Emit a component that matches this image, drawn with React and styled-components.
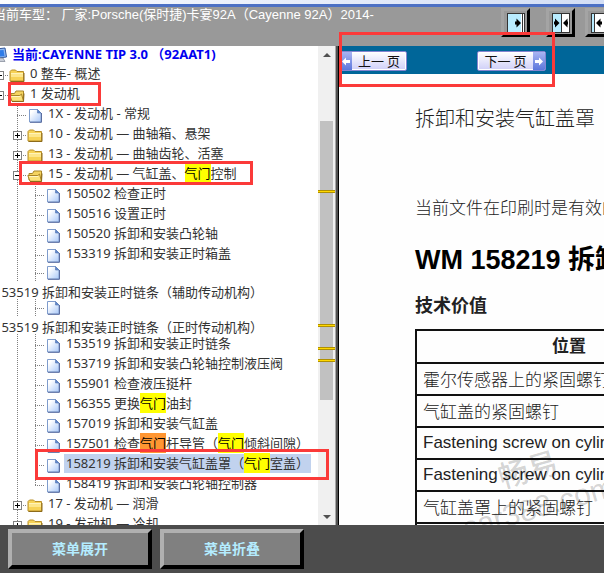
import React from "react";
import styled, { createGlobalStyle, css } from "styled-components";

const GlobalStyle = createGlobalStyle`
  * { box-sizing: border-box; }
  html, body { margin: 0; padding: 0; }
  body {
    font-family: "Noto Sans", "Noto Sans CJK SC", sans-serif;
    font-size: 13px;
    color: #333;
    overflow: hidden;
  }
  ul { list-style: none; margin: 0; padding: 0; }
  a { color: inherit; text-decoration: none; }
  button { font: inherit; padding: 0; cursor: pointer; }
`;

const Page = styled.div`
  display: flex;
  flex-direction: column;
  height: 100vh;
  overflow: hidden;
  background: #fff;
`;

/* ---------- header ---------- */

const WindowEdge = styled.div`
  flex: none;
  height: 7px;
  background: linear-gradient(90deg, #fbfcff, #d3def5);
  border-bottom: 3px solid #4c70c4;
`;

const Header = styled.header`
  flex: none;
  display: flex;
  justify-content: space-between;
  height: 39px;
  background: #999;
`;

const VehicleName = styled.h1`
  flex: none;
  margin: 0 0 0 -7px;
  font: 400 13px/15px "Liberation Sans", "Noto Sans CJK SC", sans-serif;
  color: #fff;
  white-space: pre;
`;

const LayoutTools = styled.div`
  flex: 0 0 103px;
  display: flex;
  align-items: flex-start;
  gap: 16px;
  padding-top: 1px;
  overflow: hidden;
`;

const ToolGroup = styled.div`
  display: flex;
  gap: 10px;
`;

const ToolButton = styled.button`
  flex: none;
  display: grid;
  place-items: center;
  width: 29px;
  height: 29px;
  background: #999;
  border: 3px solid;
  border-color: #a4a4a4 #000 #000 #a4a4a4;
`;

function LayoutIcon({ kind }) {
  return (
    <svg width="18" height="20" viewBox="0 0 18 20" shapeRendering="crispEdges">
      <rect x="0" y="0" width="18" height="20" fill="#333" />
      <rect x="1" y="1" width="16" height="18" fill="#fff" />
      {kind === "right" && <path d="M1 1h13v18H1z" fill="#b9ecff" />}
      {kind === "both" && <path d="M1 1h8v18H1z" fill="#b9ecff" />}
      {kind === "left" && <path d="M1 1h3v18H1z" fill="#b9ecff" />}
      {kind === "right" && <path d="M15 1h1v18h-1z" fill="#333" />}
      {kind === "both" && <path d="M9 1h1v18H9z" fill="#333" />}
      {kind === "left" && <path d="M3 1h1v18H3z" fill="#333" />}
      <g fill="#000" shapeRendering="auto">
        {kind === "right" && <path d="M8 8.500h1.500V5.500L14 10l-4.500 4.500v-3H8z" />}
        {kind === "both" && (
          <path d="M2 8.500h1V5.500L7.500 10 3 14.500v-3H2zM16 8.500h-.5V5.500L11 10l4.500 4.500v-3h.5z" />
        )}
        {kind === "left" && <path d="M11 8.500H9.500V5.500L5 10l4.500 4.500v-3H11z" />}
      </g>
    </svg>
  );
}

/* ---------- main split ---------- */

const Main = styled.main`
  flex: 1;
  min-height: 0;
  display: grid;
  grid-template-columns: 335px 4px minmax(0, 1fr);
`;

const Splitter = styled.div`
  background: linear-gradient(90deg, #a8a8a8 0 1px, #505050 1px 3px, #000 3px);
`;

const TreePane = styled.nav`
  display: grid;
  grid-template-columns: minmax(0, 1fr) 17px;
  min-height: 0;
`;

const TreeView = styled.div`
  min-height: 0;
  overflow-x: visible;
  overflow-y: clip;
`;

const Tree = styled.ul`
  margin-left: -10px;
`;

const Row = styled.li`
  position: relative;
  display: flex;
  width: max-content;
  height: ${(p) => (p.$short ? 18 : 20)}px;
  line-height: 18px;
  white-space: pre;
`;

const RootRow = styled(Row)`
  line-height: 16px;
  font-weight: 700;
  color: #0000f0;
`;

const WrappedRow = styled.li`
  height: 17px;
  padding-left: 4px;
  line-height: 20px;
  white-space: pre;
`;

const dotsDown = "repeating-linear-gradient(180deg, #808080 0 1px, transparent 1px 2px)";
const dotsAcross = "repeating-linear-gradient(90deg, #808080 0 1px, transparent 1px 2px)";

const Guide = styled.span`
  flex: none;
  display: flex;
  align-items: center;
  justify-content: center;
  width: 18px;
  padding: ${(p) => (p.$short ? 0 : 2)}px 0 0 1px;
  ${(p) =>
    p.$branch
      ? css`
          background:
            ${dotsDown} 9px 0 / 1px ${p.$last ? "11px" : "100%"} no-repeat,
            ${dotsAcross} 9px ${p.$short ? 9 : 11}px / 9px 1px no-repeat;
        `
      : p.$through &&
        css`
          background: ${dotsDown} 9px 0 / 1px 100% no-repeat;
        `}
`;

const IconCell = styled.span`
  flex: none;
  display: flex;
  align-items: center;
  justify-content: center;
  width: 18px;
  padding-top: ${(p) => (p.$short ? 0 : 3)}px;
`;

const Toggle = styled.button`
  display: block;
  width: 9px;
  height: 9px;
  border: 1px solid #808080;
  background:
    linear-gradient(#000, #000) center / 5px 1px no-repeat,
    ${(p) => !p.$open && "linear-gradient(#000, #000) center / 1px 5px no-repeat,"}
    #fff;
`;

const Label = styled.a`
  margin-left: 2px;
  padding: 0 2px;
  height: 19px;
  background: ${(p) => (p.$selected ? "#c1d2ee" : "transparent")};
`;

const Mark = styled.mark`
  padding: 1px 0;
  color: #000;
  background: ${(p) => (p.$current ? "#ff9632" : "#ff0")};
`;

const Callout = styled.span`
  position: absolute;
  z-index: 2;
  top: ${(p) => p.$top}px;
  bottom: ${(p) => p.$bottom}px;
  left: ${(p) => p.$left}px;
  right: ${(p) => p.$right}px;
  border: 3px solid #fb3a39;
  pointer-events: none;
`;

const FolderIcon = () => (
  <svg width="16" height="15" viewBox="0 0 16 15">
    <path d="M1 13V3.500L2.500 2h4L8 3.500h6.500V13z" fill="#f7d256" stroke="#b8902c" />
    <path d="M2 5.500h12" stroke="#fff3b8" />
    <path d="M1.500 13.500h13.500V5" fill="none" stroke="#8d6b1b" />
    <path d="M2 6h12v3H2z" fill="#fde68c" />
  </svg>
);

const OpenFolderIcon = () => (
  <svg width="17" height="15" viewBox="0 0 17 15">
    <path d="M2 12V5.500h3.500L7 3h7.500v9z" fill="#f5d460" stroke="#a98526" />
    <path d="M.8 7.500h10L12.500 6l2 7.300H3z" fill="#fbe27a" stroke="#a98526" />
    <path d="M2.300 8.500h9" stroke="#fff6c4" />
    <path d="M3 13.500h11.500l.5-8" fill="none" stroke="#8d6b1b" />
  </svg>
);

const DocIcon = () => (
  <svg width="13" height="14" viewBox="0 0 13 14">
    <defs>
      <linearGradient id="paper" x1="0" y1="0" x2="1" y2="1">
        <stop offset="0.200" stopColor="#fff" />
        <stop offset="1" stopColor="#a9c8f8" />
      </linearGradient>
    </defs>
    <path d="M.5.5h8L12 4v9H.5z" fill="url(#paper)" stroke="#7f9ccc" />
    <path d="M8.500.5V4H12z" fill="#5f86cb" stroke="#5f7fb8" strokeWidth=".7" />
    <path d="M1 13.300h11.500V4" fill="none" stroke="#5a6da0" />
  </svg>
);

const ComputerIcon = () => (
  <svg width="16" height="16" viewBox="0 0 16 16">
    <path d="M1 2.500L14 1l1.500 9L3 11.500z" fill="#8fb8f2" stroke="#33589c" />
    <path d="M3 4l9.500-1 1 6-9 1z" fill="#2f7ce8" />
    <path d="M7 11h5l2 3.500H5z" fill="#c9ced8" stroke="#7c8494" strokeWidth=".7" />
  </svg>
);

function Highlighted({ parts }) {
  return parts.map((part, i) =>
    typeof part === "string" ? part : (
      <Mark key={i} $current={part.current}>{part.hit}</Mark>
    )
  );
}

const HIT = { hit: "气门" };

const ITEMS = [
  { level: 0, kind: "folder", text: ["0 整车- 概述"] },
  { level: 0, kind: "open", text: ["1 发动机"], callout: [-2, -2, 18, -19] },
  { level: 1, kind: "doc", text: ["1X - 发动机 - 常规"] },
  { level: 1, kind: "folder", text: ["10 - 发动机 — 曲轴箱、悬架"] },
  { level: 1, kind: "folder", text: ["13 - 发动机 — 曲轴齿轮、活塞"] },
  { level: 1, kind: "open", text: ["15 - 发动机 — 气缸盖、", HIT, "控制"], callout: [-3, -1, 29, -14] },
  { level: 2, kind: "doc", text: ["150502 检查正时"] },
  { level: 2, kind: "doc", text: ["150516 设置正时"] },
  { level: 2, kind: "doc", text: ["150520 拆卸和安装凸轮轴"] },
  { level: 2, kind: "doc", text: ["153319 拆卸和安装正时箱盖"] },
  { level: 2, kind: "doc", wrapped: "153519 拆卸和安装正时链条（辅助传动机构）" },
  { level: 2, kind: "doc", wrapped: "153519 拆卸和安装正时链条（正时传动机构）" },
  { level: 2, kind: "doc", text: ["153519 拆卸和安装正时链条"] },
  { level: 2, kind: "doc", text: ["153719 拆卸和安装凸轮轴控制液压阀"] },
  { level: 2, kind: "doc", text: ["155901 检查液压挺杆"] },
  { level: 2, kind: "doc", text: ["156355 更换", HIT, "油封"] },
  { level: 2, kind: "doc", text: ["157019 拆卸和安装气缸盖"] },
  { level: 2, kind: "doc", text: ["157501 检查", { hit: "气门", current: true }, "杆导管（", HIT, "倾斜间隙）"] },
  { level: 2, kind: "doc", text: ["158219 拆卸和安装气缸盖罩（", HIT, "室盖）"], selected: true, callout: [-5, -6, 45, -18] },
  { level: 2, kind: "doc", text: ["158419 拆卸和安装凸轮轴控制器"], last: true },
  { level: 1, kind: "folder", text: ["17 - 发动机 — 润滑"] },
  { level: 1, kind: "folder", text: ["19 - 发动机 — 冷却"] },
];

const ICONS = { folder: FolderIcon, open: OpenFolderIcon, doc: DocIcon };

function TreeItem({ item }) {
  const short = Boolean(item.wrapped);
  const Icon = ICONS[item.kind];
  const ancestors = Array.from({ length: item.level }, (_, i) => i);
  return (
    <>
      <Row $short={short}>
        {ancestors.map((i) => <Guide key={i} $through={i > 0} />)}
        <Guide $branch $short={short} $last={item.last}>
          {item.kind !== "doc" && (
            <Toggle type="button" aria-label={item.kind === "open" ? "折叠" : "展开"} $open={item.kind === "open"} />
          )}
        </Guide>
        <IconCell $short={short}><Icon /></IconCell>
        {item.text && (
          <Label href="#" $selected={item.selected}><Highlighted parts={item.text} /></Label>
        )}
        {item.callout && (
          <Callout $top={item.callout[0]} $bottom={item.callout[1]} $left={item.callout[2]} $right={item.callout[3]} />
        )}
      </Row>
      {item.wrapped && <WrappedRow><a href="#">{item.wrapped}</a></WrappedRow>}
    </>
  );
}

/* ---------- scrollbar ---------- */

const ScrollBar = styled.div`
  display: flex;
  flex-direction: column;
  background: #f0f0f0;
`;

const ScrollArrow = styled.button`
  flex: none;
  display: grid;
  place-items: center;
  height: 17px;
  border: 0;
  background: none;
`;

const ScrollTrack = styled.div`
  position: relative;
  flex: 1;
  padding: 58px 2px 108px;
`;

const ScrollThumb = styled.div`
  height: 100%;
  background: #c1c1c1;
`;

const HitTick = styled.span`
  position: absolute;
  left: 0;
  right: 0;
  top: ${(p) => p.$at}px;
  height: 3px;
  background: #ffd800;
  border: solid #b09000;
  border-width: 1px 0;
`;

/* ---------- document ---------- */

const DocPane = styled.section`
  position: relative;
  display: flex;
  flex-direction: column;
  min-height: 0;
`;

const PagerBar = styled.div`
  flex: none;
  display: flex;
  align-items: flex-start;
  gap: 70px;
  height: 28px;
  padding-top: 5px;
  background: #069;
`;

const PagerFrame = styled.span`
  position: absolute;
  z-index: 3;
  top: -14px;
  left: 0;
  width: 216px;
  height: 55px;
  border: 3px solid #fb3a39;
  pointer-events: none;
`;

const PagerButton = styled.button`
  display: flex;
  flex-direction: ${(p) => (p.$next ? "row-reverse" : "row")};
  align-items: stretch;
  width: ${(p) => (p.$next ? 69 : 68)}px;
  height: 20px;
  border: 1px solid #8585d0;
  border-radius: 2px;
  background: linear-gradient(#fff, #cfcff8);
  box-shadow: inset 0 0 0 1px #fff;
  overflow: hidden;
  color: #111;
  font: 400 13px/17px "Noto Sans CJK SC", sans-serif;
  white-space: pre;
`;

const PagerArrow = styled.span`
  flex: none;
  display: grid;
  place-items: center;
  width: 12px;
  background: linear-gradient(#a9b4f2, #5c77dc);
`;

const PagerText = styled.span`
  flex: 1;
  text-align: center;
`;

const Article = styled.article`
  flex: 1;
  min-height: 0;
  padding: 31px 0 0 76px;
  overflow: hidden;
  background: #fefefe;
  color: #222;
  font-family: "Liberation Sans", "Noto Sans CJK SC", sans-serif;
  white-space: nowrap;
`;

const DocTitle = styled.h2`
  margin: 0;
  font: 300 20px/26px "Noto Sans CJK SC", sans-serif;
`;

const PrintNote = styled.p`
  margin: 64px 0 0;
  font: 300 17px/24px "Noto Sans CJK SC", sans-serif;
`;

const ProcedureTitle = styled.h3`
  margin: 24px 0 0;
  font-size: 27px;
  line-height: 34px;
  font-weight: 700;
  color: #000;
`;

const SectionTitle = styled.h4`
  margin: 17px 0 0;
  font-size: 18px;
  line-height: 24px;
  font-weight: 700;
`;

const ValuesTable = styled.table`
  width: 308px;
  margin-top: 11px;
  border: 2px solid #111;
  border-collapse: collapse;
  font-size: 17px;
  line-height: 24px;

  th, td {
    height: 32px;
    padding: 0 6px;
    border: 2px solid #111;
    text-align: left;
    font-weight: 400;
  }
  th {
    height: 33px;
    text-align: center;
    font-weight: 700;
  }
`;

const LightCell = styled.td`
  font-family: "Noto Sans CJK SC", sans-serif;
  && { font-weight: 300; }
`;

const Watermark = styled.div`
  position: absolute;
  left: 116px;
  bottom: -2px;
  transform: rotate(-16deg);
  color: rgba(0, 0, 0, 0.18);
  font: 500 30px/38px "Liberation Sans", "Noto Sans CJK SC", sans-serif;
  text-align: center;
  white-space: pre;
  pointer-events: none;
`;

const DocClip = styled.div`
  position: relative;
  flex: 1;
  min-height: 0;
  display: flex;
  flex-direction: column;
  overflow: hidden;
`;

/* ---------- footer ---------- */

const Footer = styled.footer`
  flex: none;
  position: relative;
  display: flex;
  gap: 8px;
  height: 48px;
  padding: 4px 8px;
  background: #4c4c4c;
`;

const MenuButton = styled.button`
  width: 144px;
  border: 4px solid;
  border-color: #b0b0b0 #000 #000 #b0b0b0;
  background: #808080;
  color: #b4ecff;
  font-size: 14px;
  line-height: 20px;
  font-weight: 700;
`;

const VALUES = [
  "霍尔传感器上的紧固螺钉",
  "气缸盖的紧固螺钉",
  "Fastening screw on cylinder head",
  "Fastening screw on cylinder head",
  "气缸盖罩上的紧固螺钉",
  "",
];

export default function App() {
  return (
    <Page>
      <GlobalStyle />
      <WindowEdge />
      <Header>
        <VehicleName>当前车型： 厂家:Porsche(保时捷)卡宴92A（Cayenne 92A）2014-</VehicleName>
        <LayoutTools>
          <ToolButton type="button" aria-label="展开左栏"><LayoutIcon kind="right" /></ToolButton>
          <ToolGroup>
            <ToolButton type="button" aria-label="平分"><LayoutIcon kind="both" /></ToolButton>
            <ToolButton type="button" aria-label="展开右栏"><LayoutIcon kind="left" /></ToolButton>
          </ToolGroup>
        </LayoutTools>
      </Header>
      <Main>
        <TreePane>
          <TreeView>
            <Tree>
              <RootRow $short>
                <IconCell $short><ComputerIcon /></IconCell>
                <Label href="#">当前:CAYENNE TIP 3.0 （92AAT1)</Label>
              </RootRow>
              {ITEMS.map((item, i) => <TreeItem key={i} item={item} />)}
            </Tree>
          </TreeView>
          <ScrollBar>
            <ScrollArrow type="button" aria-label="向上滚动">
              <svg width="8" height="4" viewBox="0 0 8 4"><path d="M0 4l4-4 4 4z" fill="#505050" /></svg>
            </ScrollArrow>
            <ScrollTrack>
              <ScrollThumb />
              {[127, 261, 284, 296].map((at) => <HitTick key={at} $at={at} />)}
            </ScrollTrack>
            <ScrollArrow type="button" aria-label="向下滚动">
              <svg width="8" height="4" viewBox="0 0 8 4"><path d="M0 0l4 4 4-4z" fill="#505050" /></svg>
            </ScrollArrow>
          </ScrollBar>
        </TreePane>
        <Splitter />
        <DocPane>
          <PagerBar>
            <PagerButton type="button">
              <PagerArrow>
                <svg width="8" height="9" viewBox="0 0 8 9"><path d="M0 4.500L4 .5V3h4v3H4v2.500z" fill="#fff" /></svg>
              </PagerArrow>
              <PagerText>上一 页</PagerText>
            </PagerButton>
            <PagerButton type="button" $next>
              <PagerArrow>
                <svg width="8" height="9" viewBox="0 0 8 9"><path d="M8 4.500L4 .5V3H0v3h4v2.500z" fill="#fff" /></svg>
              </PagerArrow>
              <PagerText>下一 页</PagerText>
            </PagerButton>
          </PagerBar>
          <PagerFrame />
          <DocClip>
            <Article>
              <DocTitle>拆卸和安装气缸盖罩</DocTitle>
              <PrintNote>当前文件在印刷时是有效的</PrintNote>
              <ProcedureTitle>WM 158219 拆卸和安装气缸盖罩</ProcedureTitle>
              <SectionTitle>技术价值</SectionTitle>
              <ValuesTable>
                <thead><tr><th>位置</th></tr></thead>
                <tbody>
                  {VALUES.map((v, i) => (
                    <tr key={i}>{v.startsWith("F") ? <td>{v}</td> : <LightCell>{v}</LightCell>}</tr>
                  ))}
                </tbody>
              </ValuesTable>
            </Article>
            <Watermark>{"畅易\ncar388.com"}</Watermark>
          </DocClip>
        </DocPane>
      </Main>
      <Footer>
        <MenuButton type="button">菜单展开</MenuButton>
        <MenuButton type="button">菜单折叠</MenuButton>
      </Footer>
    </Page>
  );
}
